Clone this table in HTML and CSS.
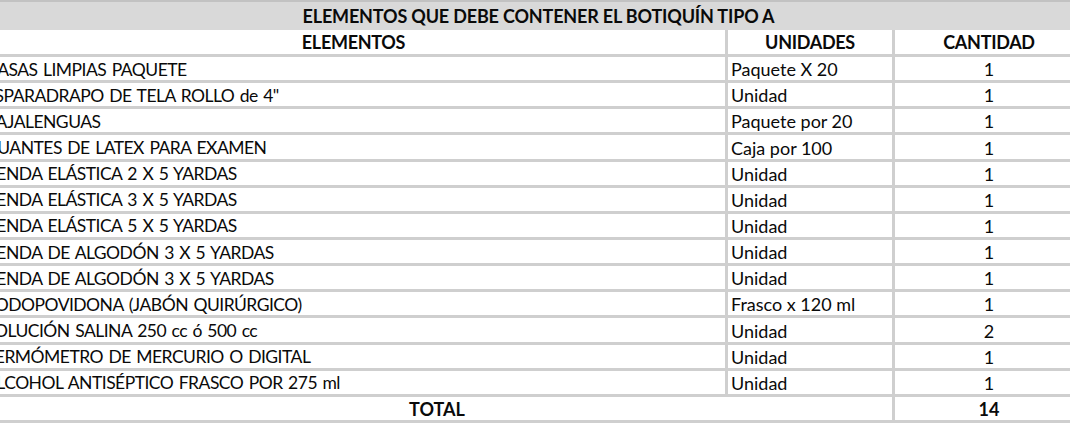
FILE: index.html
```html
<!DOCTYPE html>
<html lang="es">
<head>
<meta charset="utf-8">
<title>Botiquín tipo A</title>
<link rel="stylesheet" href="styles.css">
</head>
<body>
<div class="sheet">
  <div class="title">ELEMENTOS QUE DEBE CONTENER EL BOTIQUÍN TIPO A</div>
  <div class="grid">
    <div class="cell head">ELEMENTOS</div>
    <div class="cell head">UNIDADES</div>
    <div class="cell head">CANTIDAD</div>

    <div class="cell item">GASAS LIMPIAS PAQUETE</div><div class="cell unit">Paquete X 20</div><div class="cell qty">1</div>
    <div class="cell item">ESPARADRAPO DE TELA ROLLO de 4"</div><div class="cell unit">Unidad</div><div class="cell qty">1</div>
    <div class="cell item">BAJALENGUAS</div><div class="cell unit">Paquete por 20</div><div class="cell qty">1</div>
    <div class="cell item">GUANTES DE LATEX PARA EXAMEN</div><div class="cell unit">Caja por 100</div><div class="cell qty">1</div>
    <div class="cell item">VENDA ELÁSTICA 2 X 5 YARDAS</div><div class="cell unit">Unidad</div><div class="cell qty">1</div>
    <div class="cell item">VENDA ELÁSTICA 3 X 5 YARDAS</div><div class="cell unit">Unidad</div><div class="cell qty">1</div>
    <div class="cell item">VENDA ELÁSTICA 5 X 5 YARDAS</div><div class="cell unit">Unidad</div><div class="cell qty">1</div>
    <div class="cell item">VENDA DE ALGODÓN 3 X 5 YARDAS</div><div class="cell unit">Unidad</div><div class="cell qty">1</div>
    <div class="cell item">VENDA DE ALGODÓN 3 X 5 YARDAS</div><div class="cell unit">Unidad</div><div class="cell qty">1</div>
    <div class="cell item">YODOPOVIDONA (JABÓN QUIRÚRGICO)</div><div class="cell unit">Frasco x 120 ml</div><div class="cell qty">1</div>
    <div class="cell item">SOLUCIÓN SALINA 250 cc ó 500 cc</div><div class="cell unit">Unidad</div><div class="cell qty">2</div>
    <div class="cell item">TERMÓMETRO DE MERCURIO O DIGITAL</div><div class="cell unit">Unidad</div><div class="cell qty">1</div>
    <div class="cell item">ALCOHOL ANTISÉPTICO FRASCO POR 275 ml</div><div class="cell unit">Unidad</div><div class="cell qty">1</div>

    <div class="cell total">TOTAL</div>
    <div class="cell qty total-qty">14</div>
  </div>
</div>
</body>
</html>
```
FILE: styles.css
```css
html, body {
  margin: 0;
  padding: 0;
  background: #ffffff;
  overflow: hidden;
}

body {
  width: 1070px;
  height: 427px;
  font-family: Lato, "Liberation Sans", sans-serif;
  font-size: 18px;
  color: #0a0a0a;
}

.sheet {
  width: 1101px;
  margin-left: -18px;
  border-top: 2px solid #c2c2c2;
}

.title {
  height: 28px;
  background: #d9d9d9;
  display: flex;
  align-items: center;
  justify-content: center;
  font-weight: 700;
  letter-spacing: -0.17px;
  padding-left: 12px;
}

.grid {
  display: grid;
  grid-template-columns: 743px 164px 188px;
  grid-template-rows: 24px repeat(13, 23.15px) 23px;
  gap: 3px;
  padding-bottom: 3px;
  background: #cfcfcf;
}

.cell {
  background: #ffffff;
  display: flex;
  align-items: flex-end;
  padding-bottom: 2px;
  white-space: nowrap;
  line-height: 1;
}

.head {
  font-weight: 700;
  justify-content: center;
  align-items: center;
  padding-bottom: 0;
  letter-spacing: -0.3px;
}

.item {
  padding-left: 3px;
  font-size: 17.5px;
  letter-spacing: -0.52px;
  word-spacing: 1.5px;
}

.unit {
  padding-left: 3px;
}

.qty {
  justify-content: center;
}

.total {
  grid-column: 1 / span 2;
  justify-content: center;
  font-weight: 700;
}

.total-qty {
  font-weight: 700;
}
```
